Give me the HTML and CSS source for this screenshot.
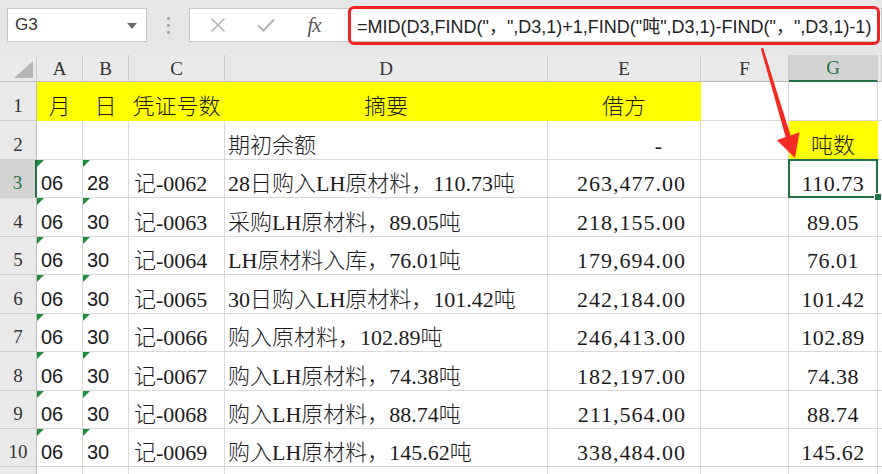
FILE: index.html
```html
<!DOCTYPE html>
<html lang="zh-CN">
<head>
<meta charset="utf-8">
<title>Excel MID FIND</title>
<link rel="stylesheet" href="styles.css">
</head>
<body>
<div class="topbar">
  <div class="namebox"><span class="nb-text">G3</span><svg class="nb-caret" width="10" height="6" viewBox="0 0 10 6"><path d="M0 0H10L5 6Z" fill="#6b6b6b"/></svg></div>
  <div class="grip"><i></i><i></i><i></i></div>
  <div class="fbox">
    <span class="ficon"><svg width="16" height="16" viewBox="0 0 16 16"><path d="M1.5 1.5L14.5 14.5M14.5 1.5L1.5 14.5" stroke="#b4b4b4" stroke-width="1.6" fill="none"/></svg></span>
    <span class="ficon"><svg width="18" height="14" viewBox="0 0 18 14"><path d="M1 7.5L6.5 12.5L17 1.5" stroke="#b4b4b4" stroke-width="2" fill="none"/></svg></span>
    <span class="ficon fx">fx</span>
    <div class="formula">=MID(D3,FIND("，",D3,1)+1,FIND("吨",D3,1)-FIND("，",D3,1)-1)</div>
  </div>
</div>

<div class="sheet">
  <div class="ch corner"><svg width="19" height="17" viewBox="0 0 19 17"><path d="M19 0V17H0Z" fill="#b5b5b5"/></svg></div>
  <div class="ch">A</div><div class="ch">B</div><div class="ch">C</div><div class="ch">D</div><div class="ch">E</div><div class="ch">F</div><div class="ch sel">G</div><div class="ch"></div>

  <div class="rh">1</div>
  <div class="c y ctr">月</div><div class="c y ctr">日</div><div class="c y ctr">凭证号数</div><div class="c y ctr">摘要</div><div class="c y ctr">借方</div><div class="c"></div><div class="c"></div><div class="c"></div>

  <div class="rh">2</div>
  <div class="c"></div><div class="c"></div><div class="c"></div><div class="c txt">期初余额</div><div class="c num dash">-</div><div class="c"></div><div class="c y ctr">吨数</div><div class="c"></div>

  <div class="rh rsel">3</div>
  <div class="c ab tri">06</div><div class="c ab tri">28</div><div class="c vc">记-0062</div><div class="c txt">28日购入LH原材料，110.73吨</div><div class="c num">263,477.00</div><div class="c"></div><div class="c ctr val active">110.73</div><div class="c"></div>

  <div class="rh">4</div>
  <div class="c ab tri">06</div><div class="c ab tri">30</div><div class="c vc">记-0063</div><div class="c txt">采购LH原材料，89.05吨</div><div class="c num">218,155.00</div><div class="c"></div><div class="c ctr val">89.05</div><div class="c"></div>

  <div class="rh">5</div>
  <div class="c ab tri">06</div><div class="c ab tri">30</div><div class="c vc">记-0064</div><div class="c txt">LH原材料入库，76.01吨</div><div class="c num">179,694.00</div><div class="c"></div><div class="c ctr val">76.01</div><div class="c"></div>

  <div class="rh">6</div>
  <div class="c ab tri">06</div><div class="c ab tri">30</div><div class="c vc">记-0065</div><div class="c txt">30日购入LH原材料，101.42吨</div><div class="c num">242,184.00</div><div class="c"></div><div class="c ctr val">101.42</div><div class="c"></div>

  <div class="rh">7</div>
  <div class="c ab tri">06</div><div class="c ab tri">30</div><div class="c vc">记-0066</div><div class="c txt">购入原材料，102.89吨</div><div class="c num">246,413.00</div><div class="c"></div><div class="c ctr val">102.89</div><div class="c"></div>

  <div class="rh">8</div>
  <div class="c ab tri">06</div><div class="c ab tri">30</div><div class="c vc">记-0067</div><div class="c txt">购入LH原材料，74.38吨</div><div class="c num">182,197.00</div><div class="c"></div><div class="c ctr val">74.38</div><div class="c"></div>

  <div class="rh">9</div>
  <div class="c ab tri">06</div><div class="c ab tri">30</div><div class="c vc">记-0068</div><div class="c txt">购入LH原材料，88.74吨</div><div class="c num">211,564.00</div><div class="c"></div><div class="c ctr val">88.74</div><div class="c"></div>

  <div class="rh">10</div>
  <div class="c ab tri">06</div><div class="c ab tri">30</div><div class="c vc">记-0069</div><div class="c txt">购入LH原材料，145.62吨</div><div class="c num">338,484.00</div><div class="c"></div><div class="c ctr val">145.62</div><div class="c"></div>

  <div class="rh"></div>
  <div class="c"></div><div class="c"></div><div class="c"></div><div class="c"></div><div class="c"></div><div class="c"></div><div class="c"></div><div class="c"></div>
</div>

<svg class="arrow" width="882" height="474" viewBox="0 0 882 474">
  <path d="M763.2 48 L790.6 135.6 L799.5 132.2 L795 158 L777 140.2 L785.6 137.1 L760.8 48.6 Z" fill="#f42a22"/>
</svg>
</body>
</html>
```

FILE: styles.css
```css
* { box-sizing: border-box; }
html, body { margin: 0; padding: 0; }
body {
  width: 882px;
  height: 474px;
  overflow: hidden;
  background: #ffffff;
  font-family: "Liberation Serif", "Noto Sans CJK SC", serif;
  color: #1b1b1b;
  position: relative;
}

/* ---------- formula bar ---------- */
.topbar {
  height: 55px;
  background: #e6e6e6;
  display: flex;
  align-items: flex-start;
}
.namebox {
  margin: 8px 0 0 7px;
  width: 140px;
  height: 34px;
  background: #fff;
  border: 1px solid #c8c8c8;
  display: flex;
  align-items: center;
  justify-content: space-between;
  padding: 0 9px 0 7px;
  font-family: "Liberation Sans", sans-serif;
  font-size: 17px;
  color: #333;
}
.nb-caret { margin-top: 1px; }
.grip {
  width: 42px;
  height: 34px;
  margin-top: 8px;
  display: flex;
  flex-direction: column;
  align-items: center;
  justify-content: center;
  gap: 4px;
}
.grip i {
  display: block;
  width: 3px;
  height: 3px;
  background: #a8a8a8;
  border-radius: 1px;
}
.fbox {
  flex: 1;
  margin-top: 8px;
  height: 34px;
  background: #fff;
  border: 1px solid #c8c8c8;
  display: flex;
  align-items: center;
  padding-left: 4px;
}
.ficon {
  width: 48px;
  display: flex;
  align-items: center;
  justify-content: center;
  flex: none;
}
.fx {
  font-family: "Liberation Serif", serif;
  font-style: italic;
  font-size: 21px;
  color: #555;
  letter-spacing: -1px;
}
.formula {
  flex: 1;
  height: 39px;
  margin-left: 10px;
  margin-right: 1px;
  border: 3px solid #f02323;
  border-radius: 6px;
  display: flex;
  align-items: center;
  padding-left: 6px;
  font-family: "Liberation Sans", "Noto Sans CJK SC", sans-serif;
  font-size: 18px;
  color: #222;
  white-space: nowrap;
  overflow: hidden;
}

/* ---------- sheet grid ---------- */
.sheet {
  display: grid;
  grid-template-columns: 37px 46px 46px 96px 323px 153px 88px 89px 4px;
  grid-template-rows: 27px 39px 39px 38px 39px 38px 39px 38px 39px 38px 38px 30px;
}
.ch {
  background: #e9e9e9;
  border-right: 1px solid #cdcdcd;
  border-bottom: 1px solid #bdbdbd;
  display: flex;
  align-items: center;
  justify-content: center;
  font-family: "Liberation Serif", serif;
  font-size: 19px;
  color: #333;
  padding-top: 1px;
}
.ch.corner {
  justify-content: flex-end;
  align-items: flex-end;
  padding: 0 3px 3px 0;
}
.ch.sel {
  background: #d3d3d3;
  color: #217346;
  border-bottom: 2px solid #217346;
}
.rh {
  background: #e9e9e9;
  border-right: 1px solid #bdbdbd;
  border-bottom: 1px solid #cdcdcd;
  display: flex;
  align-items: flex-end;
  justify-content: center;
  padding-bottom: 5px;
  font-family: "Liberation Serif", serif;
  font-size: 19px;
  line-height: 1;
  color: #333;
}
.rh.rsel {
  background: #d3d3d3;
  color: #217346;
  border-right: 2px solid #217346;
}
.c {
  position: relative;
  border-right: 1px solid #d9d9d9;
  border-bottom: 1px solid #d9d9d9;
  display: flex;
  align-items: flex-end;
  padding: 0 3px 2px 3px;
  font-size: 22px;
  font-weight: 300;
  line-height: 1;
  white-space: nowrap;
}
.c.y {
  background: #ffff00;
  border-color: #ffff00;
}
.c.ctr { justify-content: center; }
.c.txt { padding-left: 3px; }
.c.vc { padding-left: 5px; }
.c.ab {
  font-family: "Liberation Sans", sans-serif;
  font-size: 20px;
  font-weight: 400;
  padding-left: 4px;
  padding-bottom: 4px;
}
.c.num {
  justify-content: flex-end;
  padding-right: 14px;
  letter-spacing: 1px;
}
.c.num.dash { padding-right: 37px; }
.c.val { letter-spacing: 0.5px; }

/* number-stored-as-text indicator */
.c.tri::before {
  content: "";
  position: absolute;
  left: 0;
  top: 0;
  border-top: 7px solid #1f8b3b;
  border-right: 7px solid transparent;
}

/* active cell */
.c.active::after {
  content: "";
  position: absolute;
  left: -1px;
  top: -1px;
  right: -1px;
  bottom: -1px;
  border: 2px solid #217346;
  pointer-events: none;
}
.sheet .c.active + .c::before {
  content: "";
  position: absolute;
  left: -4px;
  bottom: -4px;
  width: 6px;
  height: 6px;
  background: #217346;
  border: 1px solid #fff;
  z-index: 2;
}

.arrow {
  position: absolute;
  left: 0;
  top: 0;
  pointer-events: none;
}
```
